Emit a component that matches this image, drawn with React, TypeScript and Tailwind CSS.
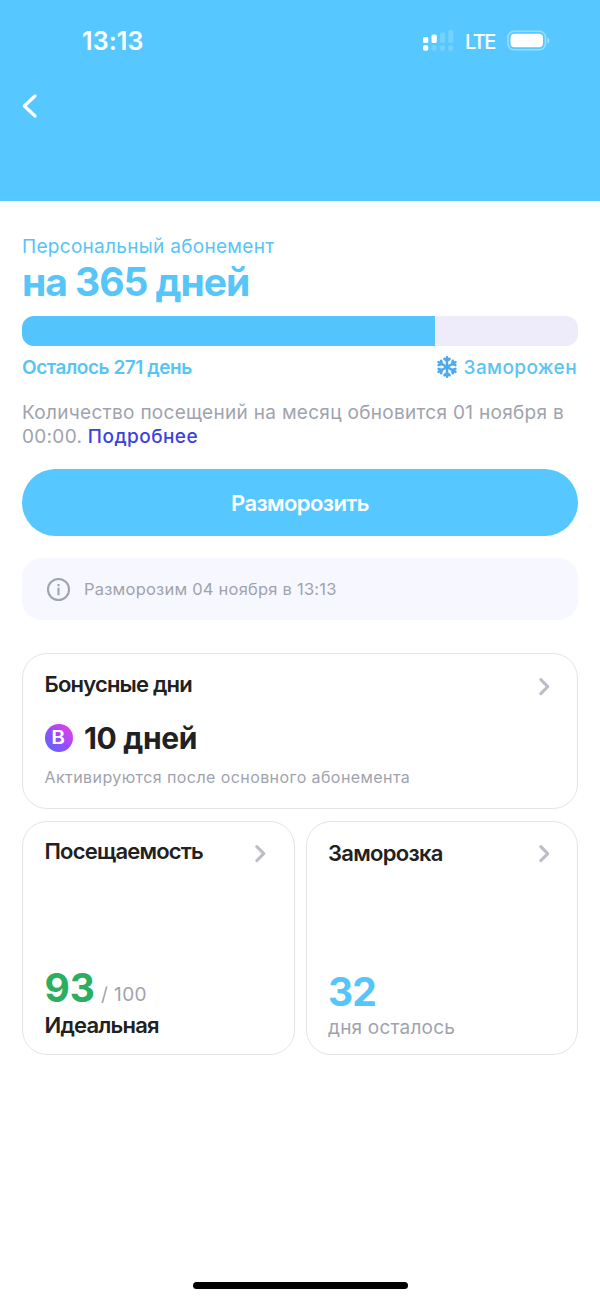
import type { ReactNode } from "react";

const DAYS_LEFT = 271;
const DAYS_TOTAL = 365;

const Chevron = () => (
  <svg width="12" height="20" viewBox="0 0 12 20" fill="none">
    <path d="M1.8 3.6L8.8 10.6L1.8 17.6" stroke="#bdbdca" strokeWidth="3" strokeLinecap="round" strokeLinejoin="round" />
  </svg>
);

const Snowflake = () => (
  <svg width="22" height="24" viewBox="-11 -12 22 24" fill="none" stroke="#4ba9ef" strokeWidth="2.5" strokeLinecap="round" strokeLinejoin="round">
    {[0, 60, 120, 180, 240, 300].map((angle) => (
      <g key={angle} transform={`rotate(${angle})`}>
        <path d="M0 0V-9.8M-2.6 -8.2L0 -6L2.6 -8.2" />
      </g>
    ))}
  </svg>
);

const StatusBar = () => (
  <div className="flex h-[82px] items-center justify-between pl-[82px] pr-[49px] text-white">
    <span className="pt-[2px] text-[25px] font-semibold tracking-[0.1px]">13:13</span>
    <div className="flex items-center">
      <svg width="32" height="22" viewBox="0 0 32 22" fill="#fff">
        <rect x="0" y="7" width="5.3" height="6" rx="1.6" />
        <rect x="8.5" y="4.5" width="5.3" height="8.5" rx="1.6" />
        <rect x="17" y="2.5" width="5" height="10.5" rx="1.6" opacity="0.18" />
        <rect x="25.3" y="0" width="5" height="13" rx="1.6" opacity="0.18" />
        <rect x="0" y="15.3" width="5.3" height="5.5" rx="1.8" />
        <rect x="8.5" y="15.3" width="5" height="5.5" rx="1.8" opacity="0.18" />
        <rect x="17" y="15.3" width="5" height="5.5" rx="1.8" opacity="0.18" />
        <rect x="25.3" y="15.3" width="5" height="5.5" rx="1.8" opacity="0.18" />
      </svg>
      <span className="ml-[10px] w-[31px] pt-px text-[20px] font-medium tracking-[-1.6px]">LTE</span>
      <svg className="ml-[11px]" width="44" height="22" viewBox="0 0 44 22">
        <rect x="1" y="1.2" width="37.5" height="18.6" rx="6" fill="none" stroke="#fff" strokeWidth="1.6" opacity="0.4" />
        <rect x="3.5" y="3.7" width="32.5" height="13.6" rx="4" fill="#fff" />
        <path d="M40.5 7.5C42.8 8.3 42.8 12.7 40.5 13.5Z" fill="#fff" opacity="0.5" />
      </svg>
    </div>
  </div>
);

const Card = ({ className = "", children }: { className?: string; children: ReactNode }) => (
  <div className={`rounded-[25px] border border-[#e4e4e8] px-[21.5px] ${className}`}>{children}</div>
);

export default function App() {
  return (
    <div className="flex h-[1300px] w-[600px] flex-col bg-white font-['Inter',sans-serif] text-[#212121]">
      <header className="h-[201px] bg-[#56c8ff]">
        <StatusBar />
        <button className="ml-[20px] mt-[10px] block">
          <svg width="20" height="28" viewBox="0 0 20 28" fill="none">
            <path d="M15 4L4.3 14L15 24" stroke="#fff" strokeWidth="3.3" strokeLinecap="round" strokeLinejoin="round" />
          </svg>
        </button>
      </header>

      <main className="px-[22px] pt-[34px]">
        <p className="h-6 text-[19px] leading-6 tracking-[0.3px] text-[#58c4f5]">Персональный абонемент</p>
        <h1 className="h-[47px] text-[39px] font-bold leading-[46px] tracking-[-1.05px] text-[#56c5fa]">на 365 дней</h1>

        <div className="mt-[10px] h-[30px] overflow-hidden rounded-[12px] bg-[#eeecfb]">
          <div className="h-full bg-[#54c5fc]" style={{ width: `${(DAYS_LEFT / DAYS_TOTAL) * 100}%` }} />
        </div>

        <div className="mt-[9px] flex h-6 items-center justify-between whitespace-nowrap text-[19px] leading-6 text-[#58c4f5]">
          <span className="pt-px font-semibold tracking-[-0.45px]">Осталось {DAYS_LEFT} день</span>
          <span className="flex items-center gap-[6px] pr-px font-medium tracking-[0.4px]">
            <Snowflake />
            <span className="pt-px">Заморожен</span>
          </span>
        </div>

        <p className="mt-[22px] whitespace-nowrap text-[19px] leading-[23.5px] tracking-[0.3px] text-[#a0a3ad]">
          Количество посещений на месяц обновится 01 ноября в
          <br />
          00:00. <a className="font-medium tracking-[0.45px] text-[#3b42dc]">Подробнее</a>
        </p>

        <button className="mt-[21px] h-[67px] w-full rounded-full bg-[#56c8ff] pt-px text-[22px] font-semibold tracking-[-0.6px] text-white">
          Разморозить
        </button>

        <div className="mt-[22px] flex h-[62px] items-center rounded-[20px] bg-[#f7f7ff] pl-[24px]">
          <svg width="25" height="25" viewBox="0 0 25 25" fill="none" stroke="#a0a3b0" strokeWidth="2.1">
            <circle cx="12.5" cy="12.5" r="10.5" />
            <path d="M12.5 10.8V18.2M12.5 7V9.2" />
          </svg>
          <span className="ml-[13px] text-[16.5px] tracking-[0.22px] text-[#a0a3ad]">Разморозим 04 ноября в 13:13</span>
        </div>

        <Card className="mt-[33px] h-[156px] pt-[16px]">
          <div className="flex h-[28px] justify-between pr-[5px]">
            <h2 className="text-[22px] font-semibold leading-[28px] tracking-[-0.8px]">Бонусные дни</h2>
            <div className="pt-[6px]">
              <Chevron />
            </div>
          </div>
          <div className="mt-[20px] flex h-[40px] items-center">
            <span className="flex size-[28px] items-center justify-center rounded-full bg-linear-to-tr from-[#4a66ff] via-[#9a4bfb] to-[#f32ee2] text-[19px] font-semibold text-white">
              <span className="scale-x-110">B</span>
            </span>
            <span className="ml-[11.5px] text-[30px] font-bold tracking-[-0.35px]">10 дней</span>
          </div>
          <p className="mt-[7px] text-[16px] leading-6 tracking-[0.42px] text-[#a0a3ad]">Активируются после основного абонемента</p>
        </Card>

        <div className="mt-[12px] grid grid-cols-2 gap-[11px]">
          <Card className="h-[234px] pt-[15px]">
            <div className="flex h-[28px] justify-between pr-[5px]">
              <h2 className="text-[22px] font-semibold leading-[28px] tracking-[-0.8px]">Посещаемость</h2>
              <div className="pt-[6px]">
                <Chevron />
              </div>
            </div>
            <div className="mt-[99px] flex h-[48px] items-baseline leading-[48px]">
              <span className="text-[39px] font-bold text-[#2aae60]">93</span>
              <span className="relative -top-px ml-[6px] text-[19px] tracking-[0.4px] text-[#a0a3ad]">/ 100</span>
            </div>
            <p className="text-[22px] font-semibold leading-[26px] tracking-[-0.8px]">Идеальная</p>
          </Card>
          <Card className="h-[234px] pt-[17px]">
            <div className="flex h-[28px] justify-between pr-[5px]">
              <h2 className="text-[22px] font-semibold leading-[28px] tracking-[-0.7px]">Заморозка</h2>
              <div className="pt-[4px]">
                <Chevron />
              </div>
            </div>
            <p className="mt-[101px] text-[39px] font-bold leading-[48px] tracking-[-0.9px] text-[#56c5fa]">32</p>
            <p className="text-[19px] leading-[24px] tracking-[0.2px] text-[#a0a3ad]">дня осталось</p>
          </Card>
        </div>
      </main>

      <div className="mx-auto mb-[11px] mt-auto h-[7px] w-[215px] rounded-full bg-black" />
    </div>
  );
}
